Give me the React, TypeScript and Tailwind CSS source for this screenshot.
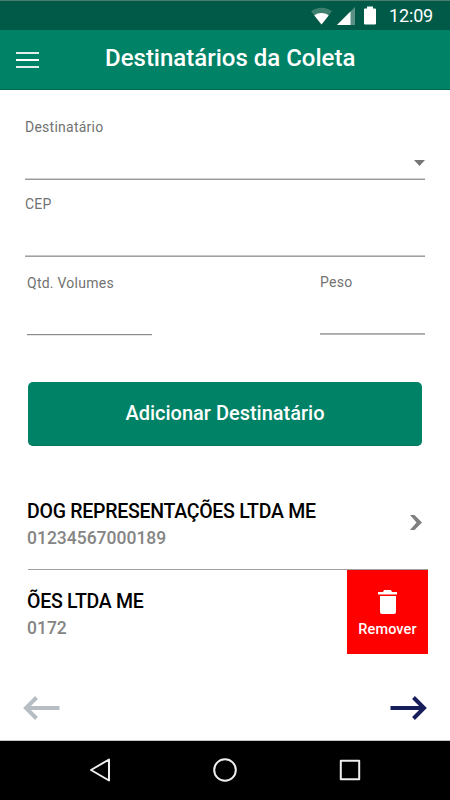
import React from 'react';

interface FieldProps {
    label: string;
    className: string;
    lineClassName: string;
    labelClassName?: string;
    children?: React.ReactNode;
}

interface RecipientProps {
    name: string;
    document: string;
    className?: string;
    children?: React.ReactNode;
}

const StatusBar: React.FC = () => (
    <div className="flex h-[30px] items-center border-t border-[#4a7d70] bg-[#005a47] pl-[311px]">
        <svg className="h-[18px] w-[21px]" viewBox="0 0 21 18">
            <path d="M0 4.3C6 -.4 15 -.4 21 4.3L10.5 17.5z" fill="#3f7f70" />
            <path d="M3.3 8.4C7.6 5.2 13.4 5.2 17.7 8.4L10.5 17.5z" fill="#fff" />
        </svg>
        <svg className="ml-[5px] h-[18px] w-[18px]" viewBox="0 0 18 18">
            <path d="M0 18L18 0V18z" fill="#5b9184" />
            <path d="M0 18L13.5 4.5V18z" fill="#fff" />
        </svg>
        <svg className="ml-[9px] h-[19px] w-3" viewBox="0 0 12 19">
            <path d="M3 .5h6v2h2q1 0 1 1v14q0 1-1 1H1q-1 0-1-1v-14q0-1 1-1h2z" fill="#fff" />
        </svg>
        <span className="ml-[13px] text-[18px] leading-[20px] tracking-[-0.15px] text-white">12:09</span>
    </div>
);

const Header: React.FC = () => (
    <header className="flex h-[60px] border-b border-[#00694f] bg-[#008266]">
        <button className="ml-4 mt-[22px] flex h-4 w-[23px] flex-col justify-between">
            <span className="h-0.5 w-full bg-[#e3eeea]" />
            <span className="h-0.5 w-full bg-white" />
            <span className="h-0.5 w-full bg-[#e3eeea]" />
        </button>
        <h1 className="ml-[66px] mt-[13px] whitespace-nowrap text-[24px] font-medium leading-[30px] text-white">
            Destinatários da Coleta
        </h1>
    </header>
);

const Field: React.FC<FieldProps> = ({ label, className, lineClassName, labelClassName = '', children }) => (
    <div className={`flex flex-col justify-between ${className}`}>
        <label className={`text-[14px] leading-4 tracking-[0.25px] text-[#727272] ${labelClassName}`}>{label}</label>
        {children}
        <div className={lineClassName} />
    </div>
);

const Recipient: React.FC<RecipientProps> = ({ name, document, className = '', children }) => (
    <div className={`flex h-[84px] justify-between ${className}`}>
        <div className="-ml-px whitespace-nowrap">
            <p className="text-[19.5px] font-medium leading-6 tracking-[-0.27px] text-black">{name}</p>
            <p className="mt-[4px] text-[17.5px] font-medium leading-5 text-[#858585]">{document}</p>
        </div>
        {children}
    </div>
);

export default function App() {
    return (
        <div className="flex h-[800px] w-[450px] flex-col overflow-hidden bg-white font-['Roboto',sans-serif]">
            <StatusBar />
            <Header />

            <main className="flex h-[650px] flex-col">
                <Field
                    label="Destinatário"
                    className="ml-[25px] mt-[29px] h-[61px] w-[400px]"
                    lineClassName="h-0.5 border-b border-[#999] bg-[#d0d0d0]"
                >
                    <svg className="mt-3 h-1.5 w-[11px] self-end" viewBox="0 0 11 6">
                        <path d="M0 0h11L5.5 6z" fill="#777" />
                    </svg>
                </Field>
                <Field
                    label="CEP"
                    className="ml-[25px] mt-4 h-[61px] w-[400px]"
                    lineClassName="h-0.5 border-b border-[#a0a0a0] bg-[#c8c8c8]"
                />
                <div className="ml-[27px] mt-[18px] flex w-[398px] justify-between">
                    <Field
                        label="Qtd. Volumes"
                        className="h-[61px] w-[125px]"
                        lineClassName="h-0.5 border-t border-[#8b8b8b] bg-[#e6e6e6]"
                    />
                    <Field
                        label="Peso"
                        className="-mt-px h-[61px] w-[105px]"
                        lineClassName="h-0.5 border-t border-[#aaa] bg-[#b6b6b6]"
                    />
                </div>

                <button className="ml-7 mt-[46px] h-16 w-[394px] rounded-[5px] border-b border-[#00745a] bg-[#008266] pb-px text-[20px] font-medium leading-6 text-white">
                    Adicionar Destinatário
                </button>

                <div className="ml-7 mt-[39px] w-[400px]">
                    <Recipient name="DOG REPRESENTAÇÕES LTDA ME" document="01234567000189" className="pt-[15px]">
                        <svg className="mr-1.5 mt-[15px] h-[15px] w-[12px]" viewBox="0 0 12 15">
                            <path d="M0 0H4.5L12 7.5L4.5 15H0L6.5 7.5z" fill="#808080" />
                        </svg>
                    </Recipient>
                    <div className="h-px bg-[#a0a0a0]" />
                    <Recipient name="ÕES LTDA ME" document="0172" className="pt-5">
                        <button className="-mt-5 flex w-[81px] flex-col items-center bg-[#f00] text-white">
                            <svg className="mt-5 h-6 w-[19px]" viewBox="0 0 19 24">
                                <path d="M0 2H5L6 0H13L14 2H19V4.5H0zM2 6H18V22Q18 24 16 24H4Q2 24 2 22z" fill="#fff" />
                            </svg>
                            <span className="mt-2 text-[14.5px] font-medium leading-4 tracking-[0.1px]">Remover</span>
                        </button>
                    </Recipient>
                </div>

                <div className="ml-[23px] mt-[42px] flex w-[404px] justify-between">
                    <svg className="h-6 w-[37px]" viewBox="0 0 37 24" fill="none" stroke="#b6bec3" strokeWidth="4">
                        <path d="M36.5 12H2.5M13.5 1.5L3 12L13.5 22.5" />
                    </svg>
                    <svg className="h-6 w-[37px]" viewBox="0 0 37 24" fill="none" stroke="#171e59" strokeWidth="4">
                        <path d="M.5 12H34M23.5 1.5L34 12L23.5 22.5" />
                    </svg>
                </div>
            </main>

            <nav className="flex h-[60px] items-center justify-between border-t border-[#c4c4c4] bg-black px-[88px] pb-0.5">
                <svg className="h-6 w-6" viewBox="0 0 24 24" fill="none" stroke="#eee" strokeWidth="2" strokeLinejoin="round">
                    <path d="M21 1.5V22.5L3 12z" />
                </svg>
                <svg className="h-6 w-6" viewBox="0 0 24 24" fill="none" stroke="#eee" strokeWidth="2">
                    <circle cx="12" cy="12" r="10.8" />
                </svg>
                <svg className="h-6 w-6" viewBox="0 0 24 24" fill="none" stroke="#eee" strokeWidth="2" strokeLinejoin="round">
                    <path d="M2.8 2.8H21.2V21.2H2.8z" />
                </svg>
            </nav>
        </div>
    );
}
